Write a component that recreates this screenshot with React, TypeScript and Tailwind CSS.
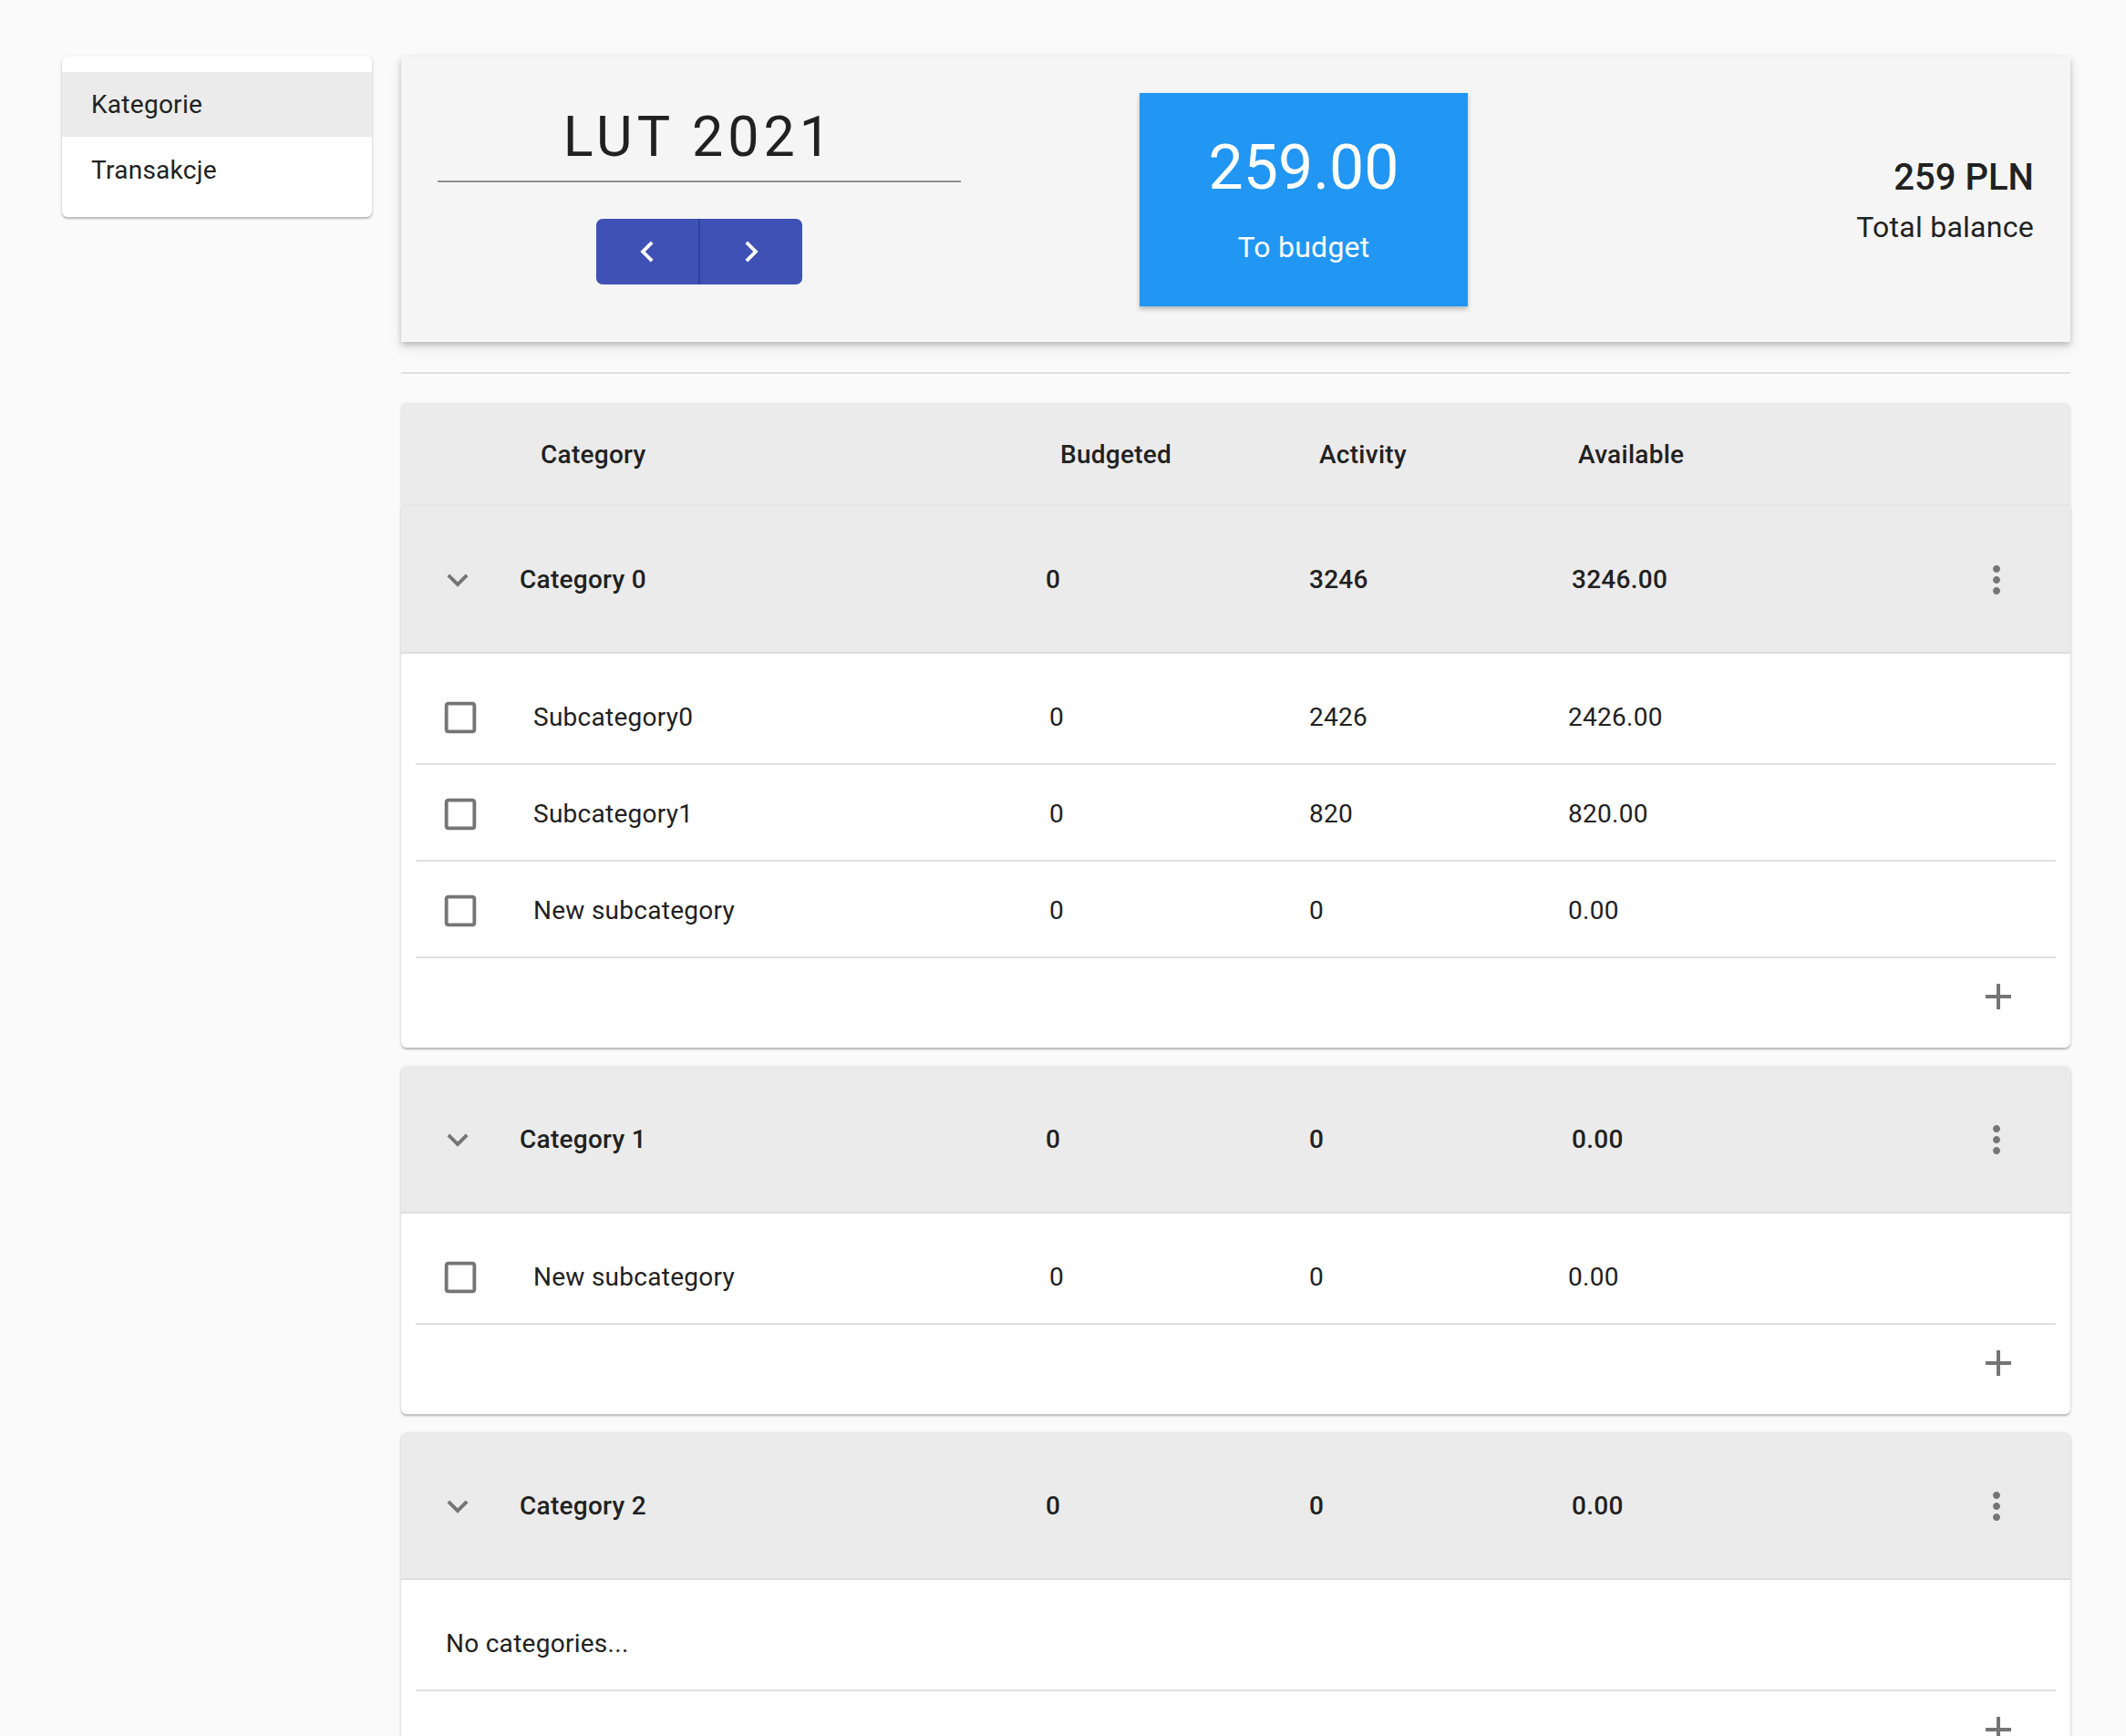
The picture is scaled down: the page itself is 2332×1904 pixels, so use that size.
import React from "react"

const paths = {
  left: "M15.41 7.41L14 6l-6 6 6 6 1.41-1.41L10.83 12z",
  right: "M10 6L8.59 7.41 13.17 12l-4.58 4.59L10 18l6-6z",
  expand: "M16.59 8.59L12 13.17 7.41 8.59 6 10l6 6 6-6z",
  more: "M12 8c1.1 0 2-.9 2-2s-.9-2-2-2-2 .9-2 2 .9 2 2 2zm0 2c-1.1 0-2 .9-2 2s.9 2 2 2 2-.9 2-2-.9-2-2-2zm0 6c-1.1 0-2 .9-2 2s.9 2 2 2 2-.9 2-2-.9-2-2-2z",
  add: "M19 13h-6v6h-2v-6H5v-2h6V5h2v6h6v2z",
  box: "M19 5v14H5V5h14m0-2H5c-1.11 0-2 .9-2 2v14c0 1.1.89 2 2 2h14c1.1 0 2-.9 2-2V5c0-1.1-.9-2-2-2z",
}

function Icon({ d, className }: { d: string; className: string }) {
  return (
    <svg viewBox="0 0 24 24" className={className} fill="currentColor">
      <path d={d} />
    </svg>
  )
}

type Sub = { name: string; budgeted: string; activity: string; available: string }
type Cat = { name: string; budgeted: string; activity: string; available: string; subs: Sub[] }

const categories: Cat[] = [
  {
    name: "Category 0", budgeted: "0", activity: "3246", available: "3246.00",
    subs: [
      { name: "Subcategory0", budgeted: "0", activity: "2426", available: "2426.00" },
      { name: "Subcategory1", budgeted: "0", activity: "820", available: "820.00" },
      { name: "New subcategory", budgeted: "0", activity: "0", available: "0.00" },
    ],
  },
  {
    name: "Category 1", budgeted: "0", activity: "0", available: "0.00",
    subs: [{ name: "New subcategory", budgeted: "0", activity: "0", available: "0.00" }],
  },
  { name: "Category 2", budgeted: "0", activity: "0", available: "0.00", subs: [] },
]

function CategoryCard({ cat, first }: { cat: Cat; first: boolean }) {
  return (
    <div className={`mb-[20px] overflow-hidden bg-white shadow-[0_2px_2px_rgba(0,0,0,0.22),0_1px_4px_rgba(0,0,0,0.1)] ${first ? "rounded-b-[6px]" : "rounded-[6px]"}`}>
      <div className="flex h-[162px] items-center border-b-2 border-[#dedede] bg-[#ebebeb] pl-[39px] pr-[57px] pt-[2px] text-[28px] font-medium">
        <Icon d={paths.expand} className="h-[46px] w-[46px] shrink-0 text-[#757575]" />
        <div className="ml-[45px] w-[577px]">{cat.name}</div>
        <div className="w-[289px]">{cat.budgeted}</div>
        <div className="w-[288px]">{cat.activity}</div>
        <div className="flex-1">{cat.available}</div>
        <Icon d={paths.more} className="h-[48px] w-[48px] shrink-0 text-[#757575]" />
      </div>
      <div className="px-[16px] pt-[16px] pb-[14px] text-[28px]">
        {cat.subs.length === 0 && (
          <div className="flex h-[106px] items-center border-b-2 border-[#e0e0e0] pl-[33px] pt-[3px]">No categories...</div>
        )}
        {cat.subs.map((s, i) => (
          <div key={i} className="flex h-[106px] items-center border-b-2 border-[#e0e0e0] pl-[26px] pt-[3px]">
            <Icon d={paths.box} className="h-[46px] w-[46px] shrink-0 text-[#757575]" />
            <div className="ml-[57px] w-[566px]">{s.name}</div>
            <div className="w-[285px]">{s.budgeted}</div>
            <div className="w-[284px]">{s.activity}</div>
            <div className="flex-1">{s.available}</div>
          </div>
        ))}
        <div className="flex h-[84px] items-center justify-end pr-[39px]">
          <Icon d={paths.add} className="h-[48px] w-[48px] text-[#757575]" />
        </div>
      </div>
    </div>
  )
}

export default function App() {
  return (
    <div className="min-h-screen bg-[#fafafa] font-['Roboto',sans-serif] tracking-[0.27px] text-[#212121]">
      <div className="flex items-start gap-[32px] pl-[68px] pr-[61px] pt-[62px]">
        <aside className="w-[340px] shrink-0 rounded-[6px] bg-white pt-[17px] pb-[17px] text-[28px] shadow-[0_2px_2px_rgba(0,0,0,0.22),0_1px_4px_rgba(0,0,0,0.1)]">
          <div className="flex h-[71px] items-center bg-[#ebebeb] pl-[32px] pt-[1px]">Kategorie</div>
          <div className="flex h-[71px] items-center pl-[32px] pt-[2px]">Transakcje</div>
        </aside>

        <main className="min-w-0 flex-1">
          <div className="flex h-[313px] items-start bg-[#f5f5f5] shadow-[0_3px_6px_rgba(0,0,0,0.2),0_6px_14px_rgba(0,0,0,0.1)]">
            <div className="ml-[40px] mt-[52px] flex w-[574px] flex-col items-center">
              <div className="w-full text-center text-[61px] leading-[72px] tracking-[5px]">LUT 2021</div>
              <div className="mt-[12px] h-[2px] w-full bg-[#8f8f8f]" />
              <div className="mt-[40px] flex h-[72px] w-[226px] overflow-hidden rounded-[7px] bg-[#3f51b5] text-white">
                <button className="flex flex-1 items-center justify-center border-r-2 border-[#303f9f]">
                  <Icon d={paths.left} className="h-[46px] w-[46px]" />
                </button>
                <button className="flex flex-1 items-center justify-center">
                  <Icon d={paths.right} className="h-[46px] w-[46px]" />
                </button>
              </div>
            </div>

            <div className="ml-[196px] mt-[40px] flex h-[234px] w-[360px] shrink-0 flex-col items-center bg-[#2196f3] pt-[48px] text-white shadow-[0_3px_5px_rgba(0,0,0,0.25)]">
              <div className="text-[68px] leading-none tracking-normal">259.00</div>
              <div className="mt-[37px] text-[32px] leading-none">To budget</div>
            </div>

            <div className="mt-[113px] flex flex-1 flex-col items-end pr-[40px]">
              <div className="text-[40px] font-medium leading-none tracking-normal">259 PLN</div>
              <div className="mt-[18px] text-[32px] leading-none">Total balance</div>
            </div>
          </div>

          <div className="mt-[33px] h-[2px] bg-[#e0e0e0]" />

          <div className="mt-[32px] flex h-[113px] items-center rounded-t-[6px] bg-[#ebebeb] pl-[153px] text-[28px] font-medium shadow-[0_1px_3px_rgba(0,0,0,0.15)]">
            <div className="w-[570px]">Category</div>
            <div className="w-[284px]">Budgeted</div>
            <div className="w-[284px]">Activity</div>
            <div>Available</div>
          </div>

          {categories.map((c, i) => (
            <CategoryCard key={i} cat={c} first={i === 0} />
          ))}
        </main>
      </div>
    </div>
  )
}
